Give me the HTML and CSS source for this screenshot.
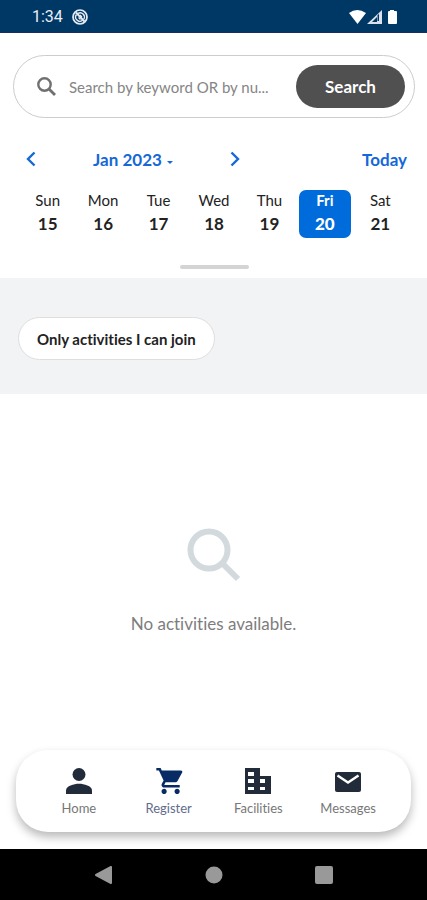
FILE: index.html
```html
<!DOCTYPE html>
<html lang="en">
<head>
<meta charset="utf-8">
<meta name="viewport" content="width=device-width, initial-scale=1">
<title>Activities</title>
<link rel="stylesheet" href="styles.css">
</head>
<body>
<div class="status">
  <span class="clock">1:34</span>
  <svg class="status-app" viewBox="0 0 16 16" width="16" height="16" fill="none" stroke="currentColor" aria-hidden="true"><circle cx="8" cy="8" r="7" stroke-width="1.7"/><path d="M4.500 5.500a4.200 4.200 0 0 0 6 5.800M6 4.400a4.200 4.200 0 0 1 5.800 5.700" stroke-width="1.400"/><path d="M4 3.500l8.500 9" stroke-width="1.900"/><path d="M6.500 8.500l2 2M8 6l2 2" stroke-width="1.200"/></svg>
  <svg class="status-icons" viewBox="0 0 50 16" width="50" height="16" aria-hidden="true"><path d="M0 4Q8 -2 17 4L8.500 15z" fill="#fff"/><path d="M33 1v14H18z" fill="#dbe2ee"/><path d="M28 8v5h-5z" fill="#003865"/><path d="M28.500 6v6h1.500V5z" fill="#003865"/><path d="M41 2V1h4v1h2q1 0 1 1v11q0 1-1 1h-7q-1 0-1-1V3q0-1 1-1z" fill="#fff"/></svg>
</div>

<header class="top">
  <form class="search">
    <svg viewBox="0 0 20 20" width="20" height="20" fill="none" stroke="#707070" stroke-width="2.400" aria-hidden="true"><circle cx="7.500" cy="7.500" r="6.200"/><path d="M12 12l6 6" stroke-width="2.800"/></svg>
    <input type="text" aria-label="Search" placeholder="Search by keyword OR by nu...">
    <button type="button">Search</button>
  </form>
  <div class="month-row">
    <button type="button" aria-label="Previous week"><svg viewBox="0 0 10 16" width="10" height="16"><path d="M8.500 1.500L2 8l6.500 6.500"/></svg></button>
    <button type="button" class="month">Jan 2023<span class="caret"></span></button>
    <button type="button" aria-label="Next week"><svg viewBox="0 0 10 16" width="10" height="16"><path d="M1.500 1.500L8 8l-6.500 6.500"/></svg></button>
    <button type="button" class="today">Today</button>
  </div>
  <div class="days">
    <button type="button" class="day">Sun<b>15</b></button>
    <button type="button" class="day">Mon<b>16</b></button>
    <button type="button" class="day">Tue<b>17</b></button>
    <button type="button" class="day">Wed<b>18</b></button>
    <button type="button" class="day">Thu<b>19</b></button>
    <button type="button" class="day selected" aria-pressed="true">Fri<b>20</b></button>
    <button type="button" class="day">Sat<b>21</b></button>
  </div>
  <div class="handle"></div>
</header>

<div class="filters"><button type="button" class="chip">Only activities I can join</button></div>

<main class="empty">
  <svg viewBox="0 0 54 54" width="54" height="54" fill="none" stroke="#d3dadd" aria-hidden="true"><circle cx="22" cy="22" r="18.500" stroke-width="6"/><path d="M36 36l15 15" stroke-width="6"/></svg>
  <p>No activities available.</p>
</main>

<nav class="tabs">
  <a href="#"><svg viewBox="0 0 26 26" width="26" height="26" aria-hidden="true"><circle cx="13" cy="6.500" r="6.500"/><path d="M0 26v-3.500C0 18 8 15.800 13 15.800S26 18 26 22.500V26z"/></svg>Home</a>
  <a href="#" class="active"><svg viewBox="0 2 21.500 20" width="28" height="26" aria-hidden="true"><path d="M7 18c-1.100 0-1.990.9-1.990 2S5.900 22 7 22s2-.9 2-2-.9-2-2-2zM1 2v2h2l3.600 7.590-1.350 2.450c-.16.28-.25.61-.25.960 0 1.100.9 2 2 2h12v-2H7.420c-.14 0-.25-.11-.25-.25l.03-.12.9-1.630h7.450c.75 0 1.410-.41 1.750-1.030l3.580-6.490A1 1 0 0 0 20 4H5.210l-.94-2H1zm16 16c-1.100 0-1.990.9-1.990 2s.89 2 1.990 2 2-.9 2-2-.9-2-2-2z"/></svg>Register</a>
  <a href="#"><svg viewBox="0 0 26 26" width="26" height="26" aria-hidden="true"><path fill-rule="evenodd" d="M0 0h15v8h11v18H0zM3 4v4h6V4zM3 11v4h6v-4zM3 19v3h6v-3zM15 11v4h5v-4zM15 19v3h5v-3z"/></svg>Facilities</a>
  <a href="#"><svg viewBox="0 0 26 26" width="26" height="26" aria-hidden="true"><rect y="4" width="26" height="20" rx="2"/><path d="M2.500 7.500L13 14.500l10.500-7" fill="none" stroke="#fff" stroke-width="2.400"/></svg>Messages</a>
</nav>

<div class="system">
  <button type="button" aria-label="Back"><svg viewBox="0 0 18 18" width="18" height="18"><path d="M1 9L16 1v16z" stroke-width="2" stroke-linejoin="round" stroke="#999"/></svg></button>
  <button type="button" aria-label="Home screen"><svg viewBox="0 0 18 18" width="18" height="18"><circle cx="9" cy="9" r="8.500"/></svg></button>
  <button type="button" aria-label="Recent apps"><svg viewBox="0 0 18 18" width="18" height="18"><rect width="18" height="18" rx="2"/></svg></button>
</div>
</body>
</html>
```
FILE: styles.css
```css
* { box-sizing: border-box; }
body {
  margin: 0;
  min-height: 100vh;
  display: flex;
  flex-direction: column;
  background: #fff;
  color: #222;
  font-family: Lato, "Open Sans", sans-serif;
  font-variant-ligatures: none;
}
button, input {
  font: inherit;
  font-variant-ligatures: none;
  color: inherit;
  border: 0;
  padding: 0;
  background: none;
}
svg { display: block; flex: none; }

.status {
  height: 33px;
  padding: 2px 28px 0 32px;
  display: flex;
  align-items: center;
  gap: 9px;
  background: #003865;
  border-bottom: 1px solid #1b2b66;
  color: #e8edf5;
}
.clock { font: 400 16px/20px Roboto, sans-serif; }
.status-icons { margin-left: auto; }

.top {
  display: flex;
  flex-direction: column;
  padding: 22px 12px 9px 13px;
}
.search {
  height: 63px;
  display: flex;
  align-items: center;
  gap: 12px;
  padding: 0 9px 0 23px;
  border: 1px solid #ccc;
  border-radius: 32px;
}
.search input {
  flex: 1;
  min-width: 0;
  font-size: 15px;
  outline: none;
}
.search input::placeholder { color: #858585; opacity: 1; }
.search button {
  width: 109px;
  height: 43px;
  border-radius: 22px;
  background: #505050;
  color: #fff;
  font-size: 17px;
  font-weight: 700;
}
.month-row {
  display: grid;
  grid-template-columns: 10px 194px 10px 1fr;
  align-items: center;
  height: 24px;
  margin: 29px 8px 0 13px;
  color: #1468d8;
  font-size: 17px;
  font-weight: 700;
}
.month-row svg { fill: none; stroke: currentColor; stroke-width: 2.4; }
.month {
  display: flex;
  align-items: center;
  justify-content: center;
  gap: 5px;
}
.caret {
  border: 3px solid transparent;
  border-top: 3px solid currentColor;
  border-bottom: 0;
  margin-top: 6px;
}
.today { justify-self: end; }

.days {
  display: grid;
  grid-template-columns: repeat(7, 1fr);
  margin: 19px 7px 0;
}
.day {
  height: 48px;
  margin: 0 2px;
  border-radius: 7px;
  font-size: 15px;
  line-height: 20px;
}
.day b {
  display: block;
  font-size: 17px;
  line-height: 28px;
}
.selected { background: #006cdb; color: #fff; font-weight: 700; }
.handle {
  width: 69px;
  height: 4px;
  margin-top: 27px;
  align-self: center;
  border-radius: 2px;
  background: #d4d4d4;
}

.filters { padding: 39px 18px 34px; background: #f1f3f5; }
.chip {
  height: 43px;
  padding: 0 18px;
  border: 1px solid #dedede;
  border-radius: 22px;
  background: #fff;
  font-size: 15px;
  font-weight: 700;
}

.empty {
  flex: 1;
  display: flex;
  flex-direction: column;
  align-items: center;
  justify-content: center;
  gap: 30px;
  padding-top: 20px;
  color: #7d7d7d;
  font-size: 17px;
  line-height: 24px;
}
.empty p { margin: 0; }

.tabs {
  display: grid;
  grid-template-columns: repeat(4, 1fr);
  height: 82px;
  margin: 0 16px 17px;
  padding: 18px 18px 0;
  border-radius: 32px;
  background: #fff;
  box-shadow: 0 5px 10px rgba(0, 0, 0, .28);
}
.tabs a {
  display: flex;
  flex-direction: column;
  align-items: center;
  gap: 6px;
  color: #777;
  font-size: 13px;
  line-height: 16px;
  text-decoration: none;
}
.tabs svg { fill: #222b3a; }
.tabs .active { color: #626c8c; }
.tabs .active svg { fill: #082b65; }

.system {
  display: flex;
  justify-content: center;
  align-items: center;
  gap: 92px;
  height: 51px;
  background: #000;
}
.system svg { fill: #999; }
```
